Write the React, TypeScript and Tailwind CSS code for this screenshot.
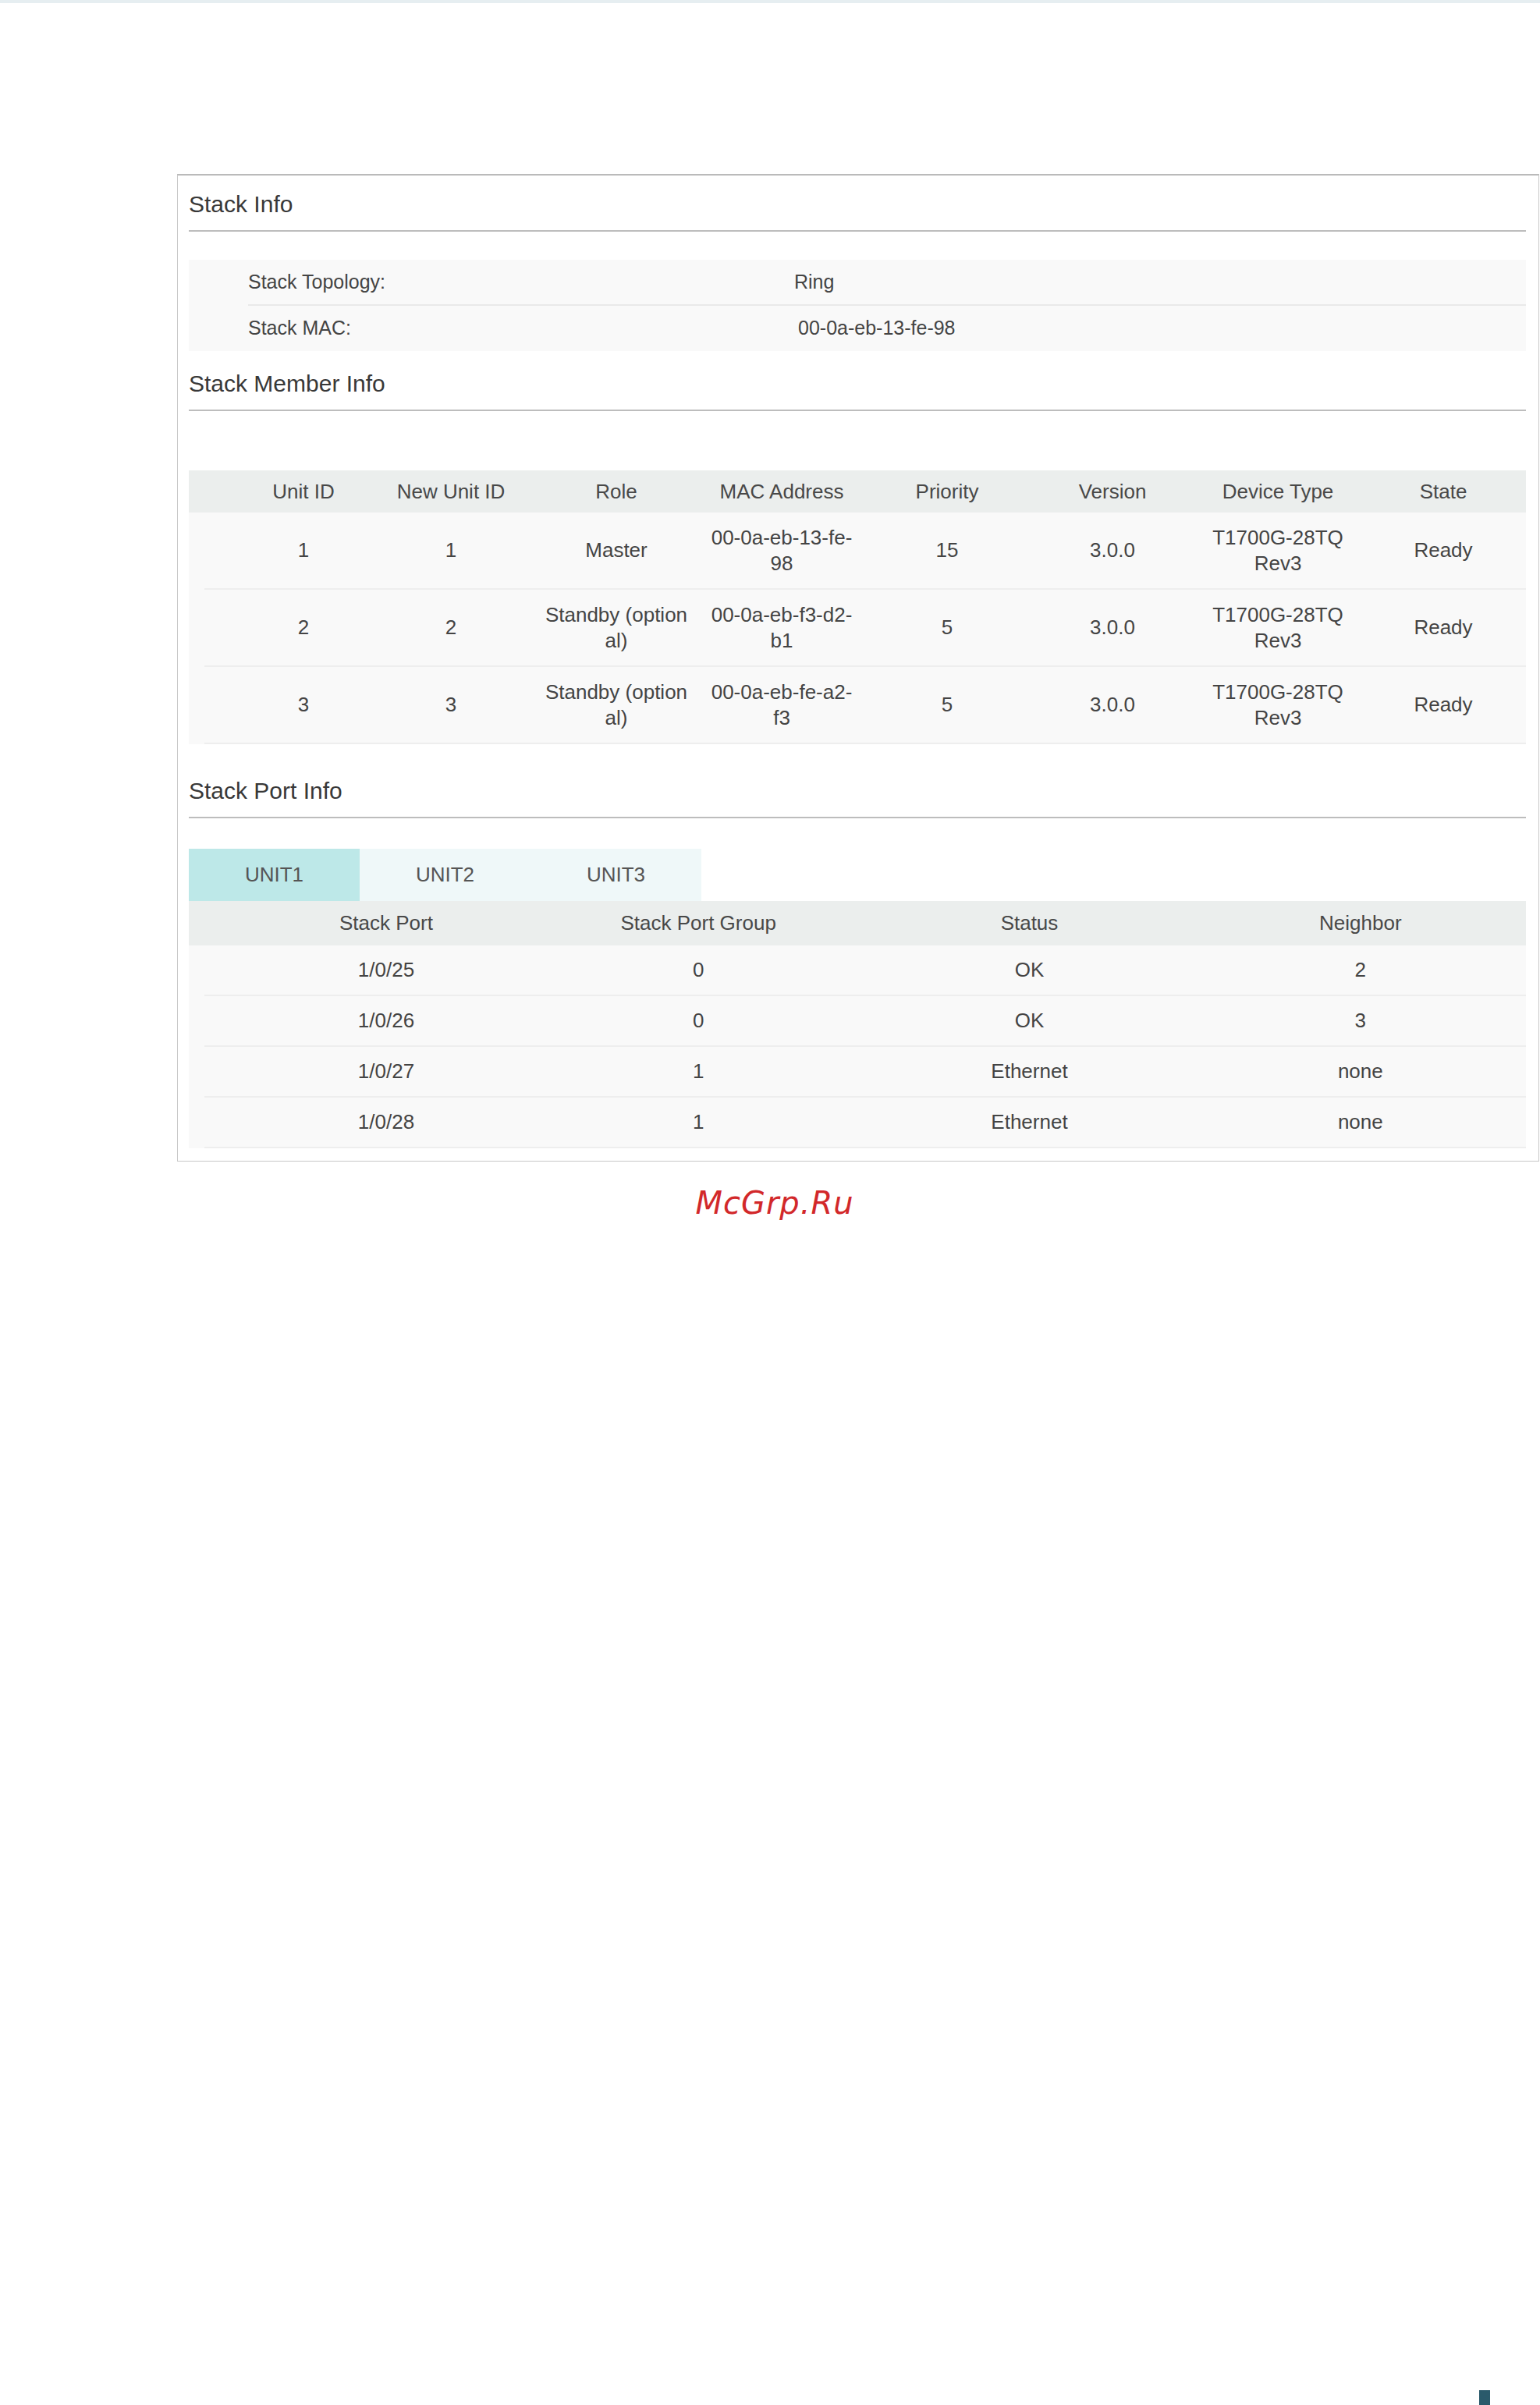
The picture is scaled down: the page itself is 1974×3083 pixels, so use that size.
import React from "react";

const members = [
  { id: "1", newId: "1", role: "Master", mac: "00-0a-eb-13-fe-98", priority: "15", version: "3.0.0", type: "T1700G-28TQ Rev3", state: "Ready" },
  { id: "2", newId: "2", role: "Standby (optional)", mac: "00-0a-eb-f3-d2-b1", priority: "5", version: "3.0.0", type: "T1700G-28TQ Rev3", state: "Ready" },
  { id: "3", newId: "3", role: "Standby (optional)", mac: "00-0a-eb-fe-a2-f3", priority: "5", version: "3.0.0", type: "T1700G-28TQ Rev3", state: "Ready" },
];

const ports = [
  { port: "1/0/25", group: "0", status: "OK", neighbor: "2" },
  { port: "1/0/26", group: "0", status: "OK", neighbor: "3" },
  { port: "1/0/27", group: "1", status: "Ethernet", neighbor: "none" },
  { port: "1/0/28", group: "1", status: "Ethernet", neighbor: "none" },
];

const Section = ({ title, className }: { title: string; className?: string }) => (
  <div className={className}>
    <div className="text-[30px] leading-[40px] text-[#383838]">{title}</div>
    <div className="mt-[13px] h-[2px] bg-[#bdbdbd]" />
  </div>
);

const memberCols = "grid grid-cols-[64px_166px_repeat(7,minmax(0,1fr))] items-center text-center";
const portCols = "grid grid-cols-[65px_376px_repeat(3,minmax(0,1fr))] items-center text-center";

const App = () => {
  return (
    <div className="flex min-h-[3083px] flex-col bg-white font-['Liberation_Sans',Arial,sans-serif] text-[#444]">
      <div className="h-[4px] bg-[#e6eef1]" />

      <div className="ml-[227px] mt-[219px] w-[1746px] border border-t-2 border-[#c8c8c8] border-t-[#bababa] pb-[16px] pl-[14px] pr-[16px] pt-[17px]">
        <Section title="Stack Info" />

        <div className="mt-[36px] bg-[#f9f9f9] pl-[76px] text-[25px]">
          <div className="flex h-[59px] items-center border-b-2 border-[#e9e9e9]">
            <div className="w-[700px]">Stack Topology:</div>
            <div>Ring</div>
          </div>
          <div className="flex h-[58px] items-center">
            <div className="w-[705px]">Stack MAC:</div>
            <div>00-0a-eb-13-fe-98</div>
          </div>
        </div>

        <Section title="Stack Member Info" className="mt-[22px]" />

        <div className="mt-[76px] text-[26px] leading-[33px]">
          <div className={`${memberCols} h-[54px] bg-[#ebeeed] text-[#484848]`}>
            <div />
            <div>Unit ID</div>
            <div>New Unit ID</div>
            <div>Role</div>
            <div>MAC Address</div>
            <div>Priority</div>
            <div>Version</div>
            <div>Device Type</div>
            <div>State</div>
          </div>
          <div className="bg-[#f9f9f9]">
            {members.map((m) => (
              <div key={m.id}>
                <div className={`${memberCols} h-[97px]`}>
                  <div />
                  <div>{m.id}</div>
                  <div>{m.newId}</div>
                  <div className="break-all px-[14px]">{m.role}</div>
                  <div className="break-all px-[14px]">{m.mac}</div>
                  <div>{m.priority}</div>
                  <div>{m.version}</div>
                  <div className="px-[14px]">{m.type}</div>
                  <div>{m.state}</div>
                </div>
                <div className="ml-[20px] h-[2px] bg-[#eeeeee]" />
              </div>
            ))}
          </div>
        </div>

        <Section title="Stack Port Info" className="mt-[40px]" />

        <div className="mt-[39px] flex w-[657px] bg-[#eff8f9] text-[26px] text-[#555]">
          <div className="flex h-[67px] w-[219px] items-center justify-center bg-[#bde8e8]">UNIT1</div>
          <div className="flex h-[67px] w-[219px] items-center justify-center">UNIT2</div>
          <div className="flex h-[67px] w-[219px] items-center justify-center">UNIT3</div>
        </div>

        <div className="text-[26px]">
          <div className={`${portCols} h-[57px] bg-[#ebeeed] text-[#484848]`}>
            <div />
            <div>Stack Port</div>
            <div>Stack Port Group</div>
            <div>Status</div>
            <div>Neighbor</div>
          </div>
          <div className="bg-[#f9f9f9]">
            {ports.map((p) => (
              <div key={p.port}>
                <div className={`${portCols} h-[63px]`}>
                  <div />
                  <div>{p.port}</div>
                  <div>{p.group}</div>
                  <div>{p.status}</div>
                  <div>{p.neighbor}</div>
                </div>
                <div className="ml-[20px] h-[2px] bg-[#eeeeee]" />
              </div>
            ))}
          </div>
        </div>
      </div>

      <div className="mt-[29px] pl-[12px] text-center font-['DejaVu_Sans',sans-serif] text-[40px] italic leading-[48px] tracking-[1px] text-[#d2282a]">
        McGrp.Ru
      </div>

      <div className="mt-auto flex justify-end pr-[64px]">
        <div className="h-[19px] w-[14px] bg-[#2a5a6b]" />
      </div>
    </div>
  );
};

export default App;
